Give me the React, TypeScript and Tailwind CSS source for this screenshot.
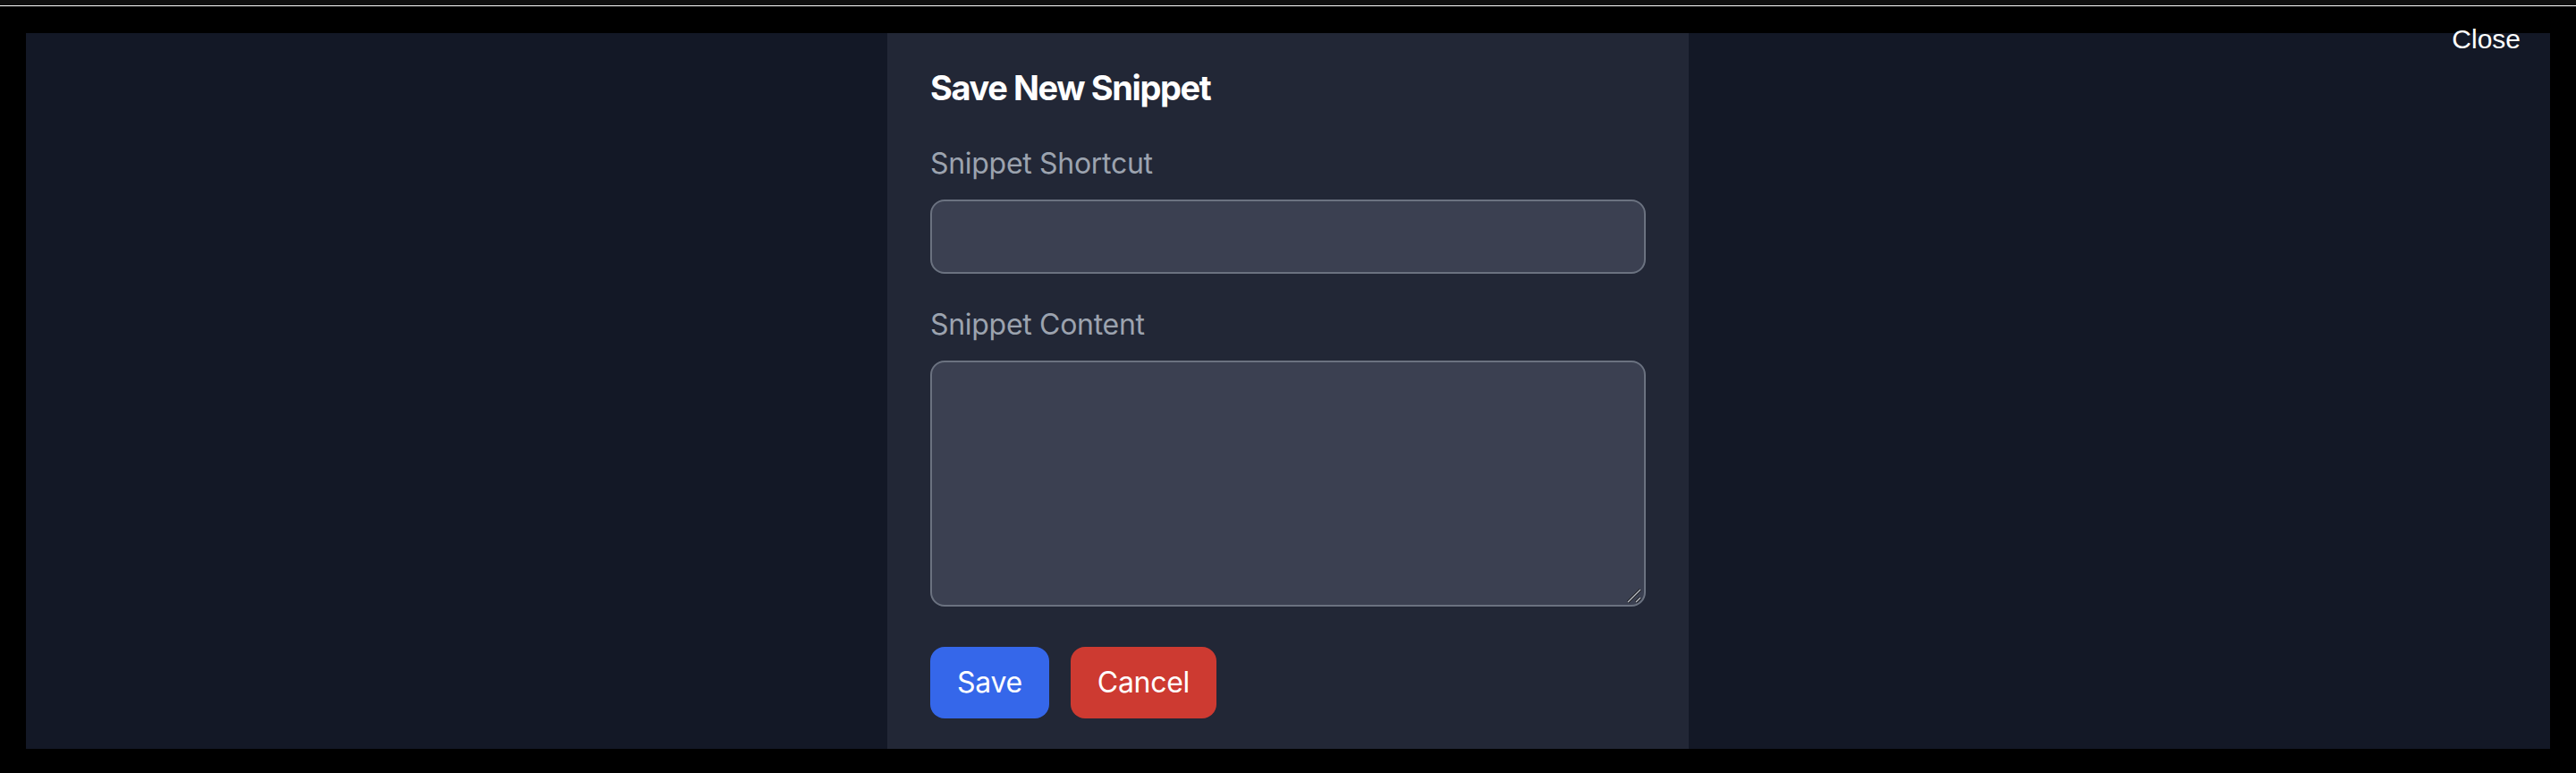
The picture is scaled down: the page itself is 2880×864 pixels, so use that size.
import React from 'react';

export default function App() {
  return (
    <div className="relative h-[864px] w-full bg-black font-['Inter',sans-serif] overflow-hidden">
      <div className="h-[6px] bg-[#0f0f0f]" />
      <div className="h-px bg-white" />

      <div className="px-[29px] pt-[30px]">
        <div className="flex h-[800px] justify-center bg-[#131826]">
          <div className="w-[896px] bg-[#222736] px-12 pt-[33px]">
            <h2 className="text-[38px] font-bold leading-[56px] tracking-[-1.4px] text-white">Save New Snippet</h2>

            <label className="mt-[33px] block text-[32px] leading-[48px] tracking-[-0.3px] text-[#9ca3af]">Snippet Shortcut</label>
            <input
              type="text"
              className="mt-4 block h-[83px] w-full rounded-2xl border-2 border-[#6b7280] bg-[#3b4051] px-6 text-[32px] text-white outline-none"
            />

            <label className="mt-[33px] block text-[32px] leading-[48px] tracking-[-0.3px] text-[#9ca3af]">Snippet Content</label>
            <div className="relative mt-4">
              <textarea className="block h-[275px] w-full resize-none rounded-2xl border-2 border-[#6b7280] bg-[#3b4051] px-6 py-4 text-[32px] text-white outline-none" />
              {/* resize grip */}
              <svg className="pointer-events-none absolute bottom-[3px] right-[4px]" width="18" height="18" viewBox="0 0 18 18">
                <path d="M2 16 L16 2" stroke="#111" strokeWidth="3" />
                <path d="M2 16 L16 2" stroke="#b8bcc6" strokeWidth="1.5" />
                <path d="M11 16 L16 11" stroke="#111" strokeWidth="3" />
                <path d="M11 16 L16 11" stroke="#b8bcc6" strokeWidth="1.5" />
              </svg>
            </div>

            <div className="mt-[45px] flex gap-6">
              <button className="h-20 rounded-2xl bg-[#3567ea] px-[30px] text-[32px] tracking-[-0.3px] text-white">Save</button>
              <button className="h-20 rounded-2xl bg-[#cd3a31] px-[30px] text-[32px] tracking-[-0.3px] text-white">Cancel</button>
            </div>
          </div>
        </div>
      </div>

      <button className="absolute right-[62px] top-[29px] font-['Liberation_Sans',Arial,sans-serif] text-[30px] leading-[30px] text-white">
        Close
      </button>
    </div>
  );
}
